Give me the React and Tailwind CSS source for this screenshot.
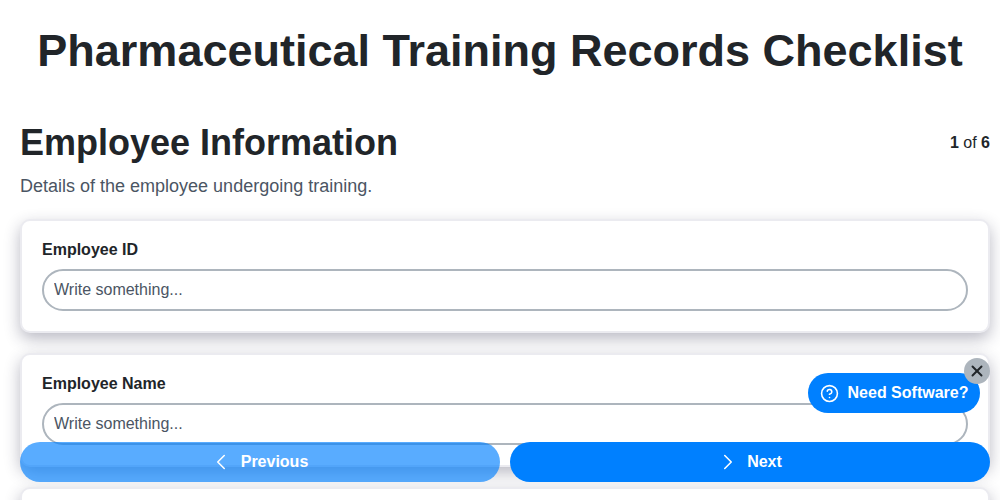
import { ChevronLeft, ChevronRight, CircleHelp, X } from "lucide-react";

const cardClass = "bg-white border-2 border-[#ebebf0] rounded-[10px] px-5 pt-[17px] pb-5 shadow-[0_6px_16px_rgba(40,40,70,0.32)]";

function Field({ label }) {
  return (
    <div className={cardClass}>
      <label className="block text-base leading-[24px] font-bold text-[#212529] mb-[7px]">{label}</label>
      <input
        type="text"
        placeholder="Write something..."
        className="block w-full h-[42px] border-2 border-[#adb5bd] rounded-full px-[10px] text-base text-[#4b5563] placeholder:text-[#4b5563] outline-none"
      />
    </div>
  );
}

export default function App() {
  return (
    <div className="relative h-[500px] w-[1000px] overflow-hidden bg-white font-['Liberation_Sans',Arial,sans-serif] text-[#212529]">
      <h1 className="text-center text-[45px] leading-[54px] font-bold pt-6">Pharmaceutical Training Records Checklist</h1>

      <div className="pl-[20px] pr-[10px] mt-[43px]">
        <div className="flex justify-between items-start">
          <div>
            <h2 className="text-[36px] leading-[43px] font-bold">Employee Information</h2>
            <p className="text-lg leading-[27px] text-[#4b5563] mt-[9px]">Details of the employee undergoing training.</p>
          </div>
          <div className="text-base leading-[24px] mt-[10px]">
            <b>1</b> of <b>6</b>
          </div>
        </div>

        <div className="flex flex-col gap-[20px] mt-[19px]">
          <Field label="Employee ID" />
          <Field label="Employee Name" />
          <div className={`${cardClass} h-[113px]`}></div>
        </div>
      </div>

      <div className="absolute left-[20px] right-[10px] top-[442px] flex gap-[10px]">
        <button className="flex-1 h-10 pr-[3px] rounded-[20px] bg-[#0080ff]/65 text-white font-bold text-base flex items-center justify-center gap-[6px]">
          <span className="-ml-[1px] mr-[1px]"><ChevronLeft size={26} strokeWidth={1.4} /></span>
          Previous
        </button>
        <button className="flex-1 h-10 pr-[3px] rounded-[20px] bg-[#0080ff] text-white font-bold text-base flex items-center justify-center gap-[6px]">
          <ChevronRight size={26} strokeWidth={1.4} />
          Next
        </button>
      </div>

      <div className="absolute left-[808px] top-[373px] w-[172px] h-10 rounded-[20px] bg-[#0080ff] text-white font-bold text-base flex items-center justify-center gap-[9px]">
        <CircleHelp size={19} strokeWidth={2} />
        Need Software?
      </div>
      <div className="absolute left-[964px] top-[358px] w-[26px] h-[26px] rounded-full bg-[#adb5bd] flex items-center justify-center text-[#212529]">
        <X size={18} strokeWidth={2.6} />
      </div>
    </div>
  );
}
